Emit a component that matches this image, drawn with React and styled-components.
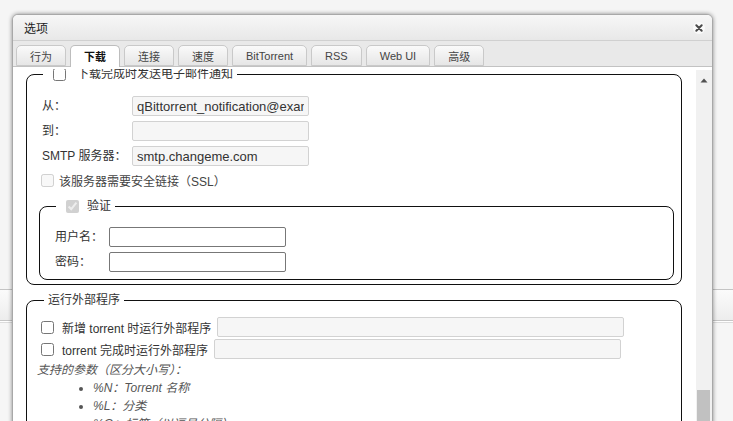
import React, { useLayoutEffect, useRef } from 'react';
import styled, { createGlobalStyle } from 'styled-components';

const GlobalStyle = createGlobalStyle`
  html, body { margin: 0; padding: 0; }
  body {
    font-family: "Liberation Sans", "Noto Sans CJK SC", sans-serif;
    font-size: 12px;
    color: #333;
    background: #f5f5f5;
  }
`;

const FONT = `"Liberation Sans", "Noto Sans CJK SC", sans-serif`;

const Page = styled.div`
  position: relative;
  width: 733px;
  height: 421px;
  overflow: hidden;
  display: flex;
  flex-direction: column;
  background: #f5f5f5;
`;

const BackdropTop = styled.div`
  height: 289px;
  flex: none;
  background: #f5f5f5;
`;

const BackdropToolbar = styled.div`
  height: 30px;
  flex: none;
  border-top: 1px solid #c4c4c4;
  border-bottom: 1px solid #c6c6c6;
  box-shadow: 0 1px 0 #ffffff, 0 2px 0 #dcdcdc;
  background: linear-gradient(#fbfbfb, #ededed);
`;

const BackdropRest = styled.div`
  flex: 1;
  margin-top: 2px;
  background: #f6f6f6;
`;

const Window = styled.div`
  position: absolute;
  left: 12px;
  top: 14px;
  width: 701px;
  height: 440px;
  box-sizing: border-box;
  border: 1px solid #a8a8a8;
  border-radius: 6px 6px 0 0;
  box-shadow: 0 0 4px rgba(0, 0, 0, 0.45);
  background: #fff;
  display: flex;
  flex-direction: column;
  overflow: hidden;
`;

const TitleBar = styled.div`
  height: 25px;
  flex: none;
  display: flex;
  align-items: center;
  justify-content: space-between;
  padding: 0 7px 0 11px;
  background: linear-gradient(#f7f7f7, #e8e8e8);
  border-bottom: 1px solid #d0d0d0;
`;

const Title = styled.span`
  font-size: 12px;
  color: #222;
`;

const CloseButton = styled.span`
  width: 12px;
  height: 12px;
  display: flex;
  align-items: center;
  justify-content: center;
`;

const TabStrip = styled.div`
  flex: none;
  height: 21px;
  padding: 4px 0 0 3px;
  display: flex;
  align-items: flex-end;
  gap: 4px;
  background: #e9e9e9;
  border-bottom: 1px solid #c2c2c2;
`;

const Tab = styled.div`
  box-sizing: border-box;
  height: ${p => (p.$active ? 22 : 21)}px;
  margin-bottom: ${p => (p.$active ? -1 : 0)}px;
  padding: 0 13px;
  display: flex;
  align-items: center;
  font-size: 11px;
  font-weight: ${p => (p.$active ? 'bold' : 'normal')};
  color: ${p => (p.$active ? '#111' : '#444')};
  border: 1px solid ${p => (p.$active ? '#bdbdbd' : '#c9c9c9')};
  border-bottom: ${p => (p.$active ? 'none' : '1px solid #c9c9c9')};
  border-radius: 5px 5px 0 0;
  background: ${p => (p.$active ? '#ffffff' : 'linear-gradient(#fafafa, #e6e6e6)')};
  padding-bottom: ${p => (p.$active ? 1 : 0)}px;
`;

const Body = styled.div`
  flex: 1;
  min-height: 0;
  display: flex;
  padding-top: 2px;
  background: #fff;
`;

const Viewport = styled.div`
  flex: 1;
  min-width: 0;
  overflow: hidden;
`;

const ScrollTrack = styled.div`
  position: relative;
  width: 16px;
  flex: none;
  margin-top: 1px;
  background: #f1f1f1;
`;

const ScrollArrow = styled.div`
  height: 20px;
  display: flex;
  align-items: center;
  justify-content: center;
`;

const ScrollThumb = styled.div`
  position: absolute;
  left: 1px;
  width: 13px;
  height: 90px;
  background: #c1c1c1;
`;

const Fieldset = styled.fieldset`
  min-width: 0;
  margin: ${p => p.$margin};
  padding: ${p => p.$padding};
  border: 1px solid #111;
  border-radius: 8px;
`;

const Legend = styled.legend`
  margin-left: ${p => p.$ml}px;
  padding: 0 4px;
  font-size: 12px;
  color: #333;
`;

const LegendRow = styled.span`
  display: flex;
  align-items: center;
  height: 16px;
  line-height: 16px;
`;

const Check = styled.input.attrs({ type: 'checkbox' })`
  flex: none;
  width: 13px;
  height: 13px;
  margin: 0 ${p => p.$mr}px 0 ${p => p.$ml}px;
`;

const FormGrid = styled.div`
  display: grid;
  grid-template-columns: ${p => p.$label}px 177px;
  row-gap: 5px;
  align-items: center;
`;

const FieldLabel = styled.label`
  padding-left: ${p => p.$pl}px;
  line-height: 20px;
  color: #333;
  white-space: nowrap;
`;

const TextInput = styled.input`
  box-sizing: border-box;
  width: ${p => p.$w}px;
  height: 20px;
  margin: 0 0 0 ${p => p.$ml || 0}px;
  padding: 0 4px;
  font: 13px ${FONT};
  color: #333;
  -webkit-text-fill-color: #333;
  opacity: 1;
  border: 1px solid ${p => (p.$muted ? '#d2d2d2' : '#777777')};
  border-radius: 2px;
  background: ${p => (p.$muted ? '#f6f6f6' : '#ffffff')};
  outline: none;
`;

const CheckRow = styled.div`
  display: flex;
  align-items: center;
  height: ${p => p.$h}px;
  margin-top: ${p => p.$mt}px;
  white-space: nowrap;
`;

const CheckText = styled.span`
  color: ${p => p.$color || '#333'};
`;

const Hint = styled.div`
  margin-top: 2px;
  line-height: 18px;
  font-style: italic;
  color: #555;
`;

const ParamList = styled.ul`
  margin: 0;
  padding-left: 56px;
  list-style: disc;
  font-style: italic;
  color: #555;
  line-height: 18px;
`;

const params = [
  '%N：Torrent 名称',
  '%L：分类',
  '%G：标签（以逗号分隔）',
  '%F：内容路径（与多文件 torrent 的根目录相同）',
  '%R：根目录（第一个 torrent 的子目录路径）',
  '%D：保存路径',
  '%C：文件数',
  '%Z：Torrent 大小（字节）',
  '%T：当前 tracker',
  '%I：信息哈希值 v1',
];

const tabs = ['行为', '下载', '连接', '速度', 'BitTorrent', 'RSS', 'Web UI', '高级'];

export default function App() {
  const viewRef = useRef(null);
  useLayoutEffect(() => {
    if (viewRef.current) viewRef.current.scrollTop = 3;
  }, []);

  return (
    <>
      <GlobalStyle />
      <Page>
        <BackdropTop />
        <BackdropToolbar />
        <BackdropRest />

        <Window>
          <TitleBar>
            <Title>选项</Title>
            <CloseButton>
              <svg width="12" height="12" viewBox="0 0 12 12">
                <circle cx="6" cy="6" r="6" fill="#fafafa" />
                <path d="M3.3 3.3 L8.7 8.7 M8.7 3.3 L3.3 8.7" stroke="#4a4a4a" strokeWidth="2" strokeLinecap="round" />
              </svg>
            </CloseButton>
          </TitleBar>

          <TabStrip>
            {tabs.map(t => (
              <Tab key={t} $active={t === '下载'}>{t}</Tab>
            ))}
          </TabStrip>

          <Body>
            <Viewport ref={viewRef}>
              <Fieldset $margin="0 14px 0 13px" $padding="14px 7px 4px 10px">
                <Legend $ml={6}>
                  <LegendRow>
                    <Check $ml={6} $mr={11} />
                    下载完成时发送电子邮件通知
                  </LegendRow>
                </Legend>

                <FormGrid $label={95}>
                  <FieldLabel $pl={5}>从：</FieldLabel>
                  <TextInput $w={177} $muted disabled defaultValue="qBittorrent_notification@example.com" />
                  <FieldLabel $pl={5}>到：</FieldLabel>
                  <TextInput $w={177} $muted disabled defaultValue="" />
                  <FieldLabel $pl={5}>SMTP 服务器：</FieldLabel>
                  <TextInput $w={177} $muted disabled defaultValue="smtp.changeme.com" />
                </FormGrid>

                <CheckRow $h={18} $mt={5}>
                  <Check $ml={4} $mr={5} disabled />
                  <CheckText $color="#444">该服务器需要安全链接（SSL）</CheckText>
                </CheckRow>

                <Fieldset $margin="9px 0 0 2px" $padding="13px 7px 7px 15px">
                  <Legend $ml={1}>
                    <LegendRow>
                      <Check $ml={6} $mr={8} disabled defaultChecked />
                      验证
                    </LegendRow>
                  </Legend>
                  <FormGrid $label={54}>
                    <FieldLabel $pl={0}>用户名：</FieldLabel>
                    <TextInput $w={177} disabled defaultValue="" />
                    <FieldLabel $pl={0}>密码：</FieldLabel>
                    <TextInput $w={177} type="password" disabled defaultValue="" />
                  </FormGrid>
                </Fieldset>
              </Fieldset>

              <Fieldset $margin="7px 14px 0 13px" $padding="9px 7px 10px 10px">
                <Legend $ml={7}>
                  <LegendRow>运行外部程序</LegendRow>
                </Legend>
                <CheckRow $h={20} $mt={0}>
                  <Check $ml={4} $mr={8} />
                  <CheckText>新增 torrent 时运行外部程序</CheckText>
                  <TextInput $w={407} $ml={6} $muted disabled defaultValue="" />
                </CheckRow>
                <CheckRow $h={20} $mt={2}>
                  <Check $ml={4} $mr={8} />
                  <CheckText>torrent 完成时运行外部程序</CheckText>
                  <TextInput $w={407} $ml={6} $muted disabled defaultValue="" />
                </CheckRow>
                <Hint>支持的参数（区分大小写）：</Hint>
                <ParamList>
                  {params.map(p => (
                    <li key={p}>{p}</li>
                  ))}
                </ParamList>
              </Fieldset>
            </Viewport>

            <ScrollTrack>
              <ScrollArrow>
                <svg width="8" height="5" viewBox="0 0 8 5">
                  <polygon points="0.5,4.5 4,0.5 7.5,4.5" fill="#505050" />
                </svg>
              </ScrollArrow>
              <ScrollThumb style={{ top: 320 }} />
            </ScrollTrack>
          </Body>
        </Window>
      </Page>
    </>
  );
}
